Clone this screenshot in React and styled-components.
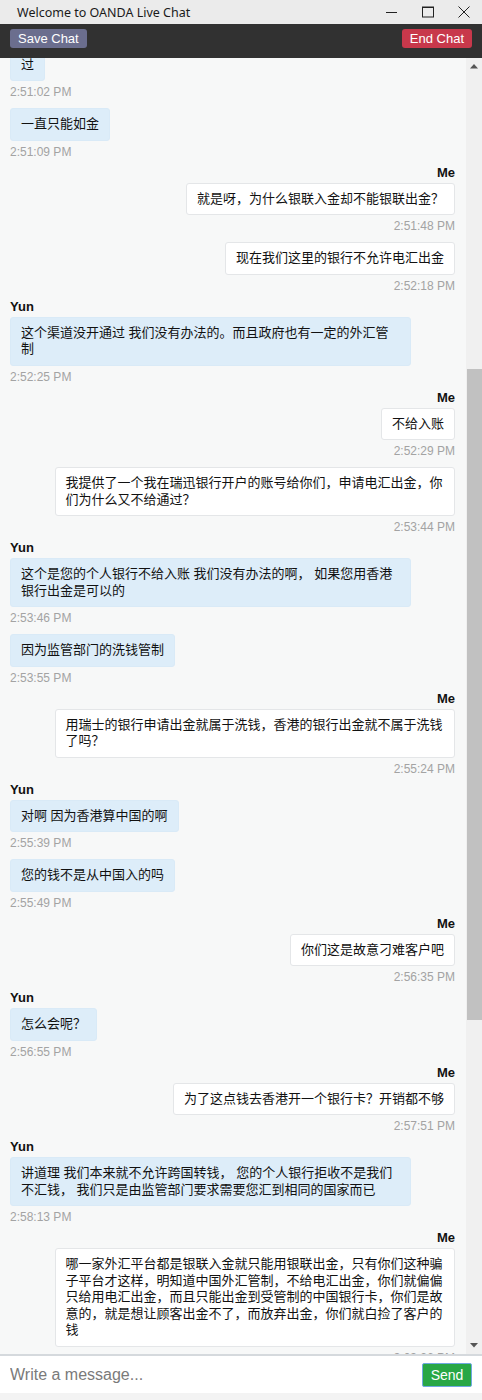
import React from "react";
import styled, { createGlobalStyle } from "styled-components";

const GlobalStyle = createGlobalStyle`
  html, body {
    margin: 0;
    padding: 0;
    background: #f7f8f8;
  }
  * {
    box-sizing: border-box;
  }
`;

const messages = [
  { from: "Yun", text: "过", time: "2:51:02 PM" },
  { from: "Yun", text: "一直只能如金", time: "2:51:09 PM" },
  { from: "Me", text: "就是呀，为什么银联入金却不能银联出金？", time: "2:51:48 PM" },
  { from: "Me", text: "现在我们这里的银行不允许电汇出金", time: "2:52:18 PM" },
  { from: "Yun", text: "这个渠道没开通过 我们没有办法的。而且政府也有一定的外汇管制", time: "2:52:25 PM" },
  { from: "Me", text: "不给入账", time: "2:52:29 PM" },
  { from: "Me", text: "我提供了一个我在瑞迅银行开户的账号给你们，申请电汇出金，你们为什么又不给通过？", time: "2:53:44 PM" },
  { from: "Yun", text: "这个是您的个人银行不给入账 我们没有办法的啊， 如果您用香港银行出金是可以的", time: "2:53:46 PM" },
  { from: "Yun", text: "因为监管部门的洗钱管制", time: "2:53:55 PM" },
  { from: "Me", text: "用瑞士的银行申请出金就属于洗钱，香港的银行出金就不属于洗钱了吗？", time: "2:55:24 PM" },
  { from: "Yun", text: "对啊 因为香港算中国的啊", time: "2:55:39 PM" },
  { from: "Yun", text: "您的钱不是从中国入的吗", time: "2:55:49 PM" },
  { from: "Me", text: "你们这是故意刁难客户吧", time: "2:56:35 PM" },
  { from: "Yun", text: "怎么会呢？", time: "2:56:55 PM" },
  { from: "Me", text: "为了这点钱去香港开一个银行卡？开销都不够", time: "2:57:51 PM" },
  { from: "Yun", text: "讲道理 我们本来就不允许跨国转钱， 您的个人银行拒收不是我们不汇钱， 我们只是由监管部门要求需要您汇到相同的国家而已", time: "2:58:13 PM" },
  {
    from: "Me",
    text: "哪一家外汇平台都是银联入金就只能用银联出金，只有你们这种骗子平台才这样，明知道中国外汇管制，不给电汇出金，你们就偏偏只给用电汇出金，而且只能出金到受管制的中国银行卡，你们是故意的，就是想让顾客出金不了，而放弃出金，你们就白捡了客户的钱",
    time: "3:03:26 PM",
  },
];

const Window = styled.div`
  height: 1400px;
  display: flex;
  flex-direction: column;
  font-family: "Liberation Sans", "Noto Sans CJK SC", sans-serif;
`;

const TitleBar = styled.div`
  height: 24px;
  flex: none;
  background: #ebebeb;
  display: flex;
  align-items: center;
  padding-left: 17px;
`;

const Title = styled.div`
  flex: 1;
  font-family: "Noto Sans", "Liberation Sans", sans-serif;
  font-size: 12.5px;
  color: #1a1a1a;
`;

const WinButton = styled.div`
  width: 36px;
  height: 24px;
  display: flex;
  align-items: center;
  justify-content: center;
`;

const Toolbar = styled.div`
  height: 34px;
  flex: none;
  background: #313131;
  display: flex;
  justify-content: space-between;
  align-items: flex-start;
  padding: 5px 10px 0 10px;
`;

const ToolButton = styled.button`
  height: 19px;
  border: none;
  border-radius: 3px;
  padding: 0 8px;
  background: ${(p) => p.$bg};
  color: #fff;
  font-family: "Liberation Sans", sans-serif;
  font-size: 13px;
  line-height: 19px;
`;

const Body = styled.div`
  flex: 1;
  min-height: 0;
  display: flex;
  background: #f7f8f8;
`;

const MessageList = styled.div`
  flex: 1;
  overflow: hidden;
  padding: 0 11px 0 10px;
`;

const ScrollContent = styled.div`
  display: flex;
  flex-direction: column;
`;

const Group = styled.div`
  display: flex;
  flex-direction: column;
  align-items: ${(p) => (p.$me ? "flex-end" : "flex-start")};
  margin-top: ${(p) => p.$top}px;
`;

const Name = styled.div`
  font-size: 13px;
  font-weight: bold;
  line-height: 16px;
  color: #111;
  margin-bottom: 2px;
`;

const Bubble = styled.div`
  max-width: 90%;
  padding: 7px 10px;
  border-radius: 3px;
  font-size: 13px;
  line-height: 16.5px;
  color: #111;
  background: ${(p) => (p.$me ? "#ffffff" : "#ddedf9")};
  border: 1px solid ${(p) => (p.$me ? "#e4e6e8" : "#d9eaf7")};
`;

const Time = styled.div`
  margin-top: 3px;
  font-size: 12px;
  line-height: 16px;
  color: #a3a3a3;
`;

const Scrollbar = styled.div`
  width: 16px;
  flex: none;
  background: #f0f0f0;
  display: flex;
  flex-direction: column;
`;

const Arrow = styled.div`
  height: 17px;
  display: flex;
  align-items: center;
  justify-content: center;
`;

const Track = styled.div`
  flex: 1;
  padding-left: 1px;
`;

const Thumb = styled.div`
  width: 15px;
  background: #c1c1c1;
`;

const InputBar = styled.div`
  flex: none;
  border-top: 2px solid #d5d9dd;
  background: #fff;
  height: 39px;
  display: flex;
  align-items: center;
  padding: 0 10px;
`;

const MessageInput = styled.input`
  flex: 1;
  min-width: 0;
  border: none;
  outline: none;
  background: transparent;
  font-family: "Liberation Sans", sans-serif;
  font-size: 16px;
  color: #333;
  padding: 0;
  &::placeholder {
    color: #7a7a7a;
  }
`;

const SendButton = styled.button`
  flex: none;
  width: 50px;
  height: 24px;
  margin-left: 8px;
  background: #28a745;
  border: 1px solid #6fa8e0;
  border-radius: 2px;
  color: #fff;
  font-family: "Liberation Sans", sans-serif;
  font-size: 14px;
  line-height: 22px;
  padding: 0;
`;

const Footer = styled.div`
  height: 7px;
  flex: none;
  background: #f3f3f3;
`;

const Triangle = ({ down }) => (
  <svg width="8" height="5" viewBox="0 0 8 5">
    <path d={down ? "M0 0 H8 L4 4.5 Z" : "M0 4.5 H8 L4 0 Z"} fill="#555" />
  </svg>
);

function App() {
  return (
    <>
      <GlobalStyle />
      <Window>
        <TitleBar>
          <Title>Welcome to OANDA Live Chat</Title>
          <WinButton>
            <svg width="12" height="12" viewBox="0 0 12 12">
              <path d="M0 6.5 H11" stroke="#222" strokeWidth="1" />
            </svg>
          </WinButton>
          <WinButton>
            <svg width="12" height="12" viewBox="0 0 12 12">
              <rect x="0.5" y="1" width="11" height="10" fill="none" stroke="#222" strokeWidth="1" />
              <path d="M0.5 1.5 H11.5" stroke="#222" strokeWidth="1" />
            </svg>
          </WinButton>
          <WinButton>
            <svg width="12" height="12" viewBox="0 0 12 12">
              <path d="M0.5 0.5 L11.5 11.5 M11.5 0.5 L0.5 11.5" stroke="#222" strokeWidth="1" />
            </svg>
          </WinButton>
        </TitleBar>
        <Toolbar>
          <ToolButton $bg="#6b6e8e">Save Chat</ToolButton>
          <ToolButton $bg="#c8384b">End Chat</ToolButton>
        </Toolbar>
        <Body>
          <MessageList>
            <ScrollContent style={{ marginTop: -9.5 }}>
              {messages.map((m, i) => {
                const me = m.from === "Me";
                const showName = i > 0 && messages[i - 1].from !== m.from;
                const top = i === 0 ? 0 : showName ? 5 : 8;
                return (
                  <Group key={i} $me={me} $top={top}>
                    {showName && <Name>{m.from}</Name>}
                    <Bubble $me={me}>{m.text}</Bubble>
                    <Time>{m.time}</Time>
                  </Group>
                );
              })}
            </ScrollContent>
          </MessageList>
          <Scrollbar>
            <Arrow>
              <Triangle />
            </Arrow>
            <Track>
              <Thumb style={{ marginTop: 294, height: 651 }} />
            </Track>
            <Arrow>
              <Triangle down />
            </Arrow>
          </Scrollbar>
        </Body>
        <InputBar>
          <MessageInput placeholder="Write a message..." />
          <SendButton>Send</SendButton>
        </InputBar>
        <Footer />
      </Window>
    </>
  );
}

export default App;
